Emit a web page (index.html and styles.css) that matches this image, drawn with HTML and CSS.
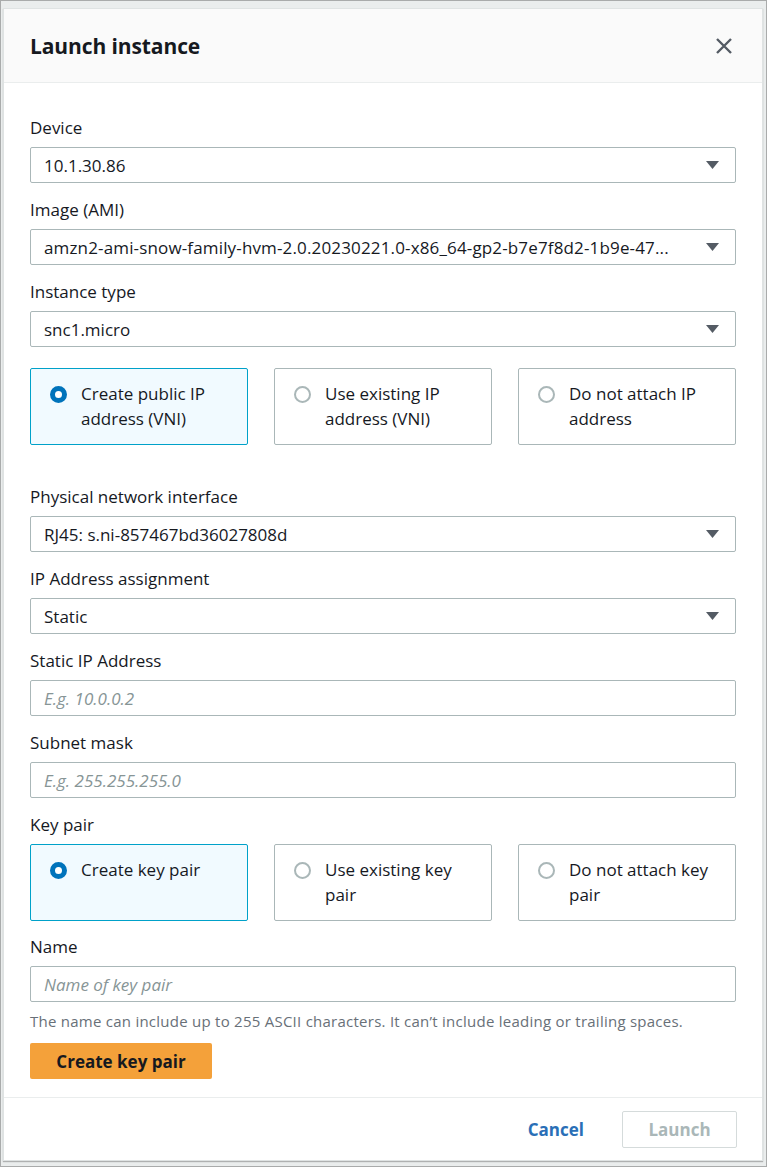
FILE: index.html
```html
<!DOCTYPE html>
<html lang="en">
<head>
<meta charset="utf-8">
<title>Launch instance</title>
<link rel="stylesheet" href="styles.css">
</head>
<body>
<div class="modal">
  <header class="modal-header">
    <h2 class="title">Launch instance</h2>
    <button class="close" aria-label="Close">
      <svg width="18" height="18" viewBox="0 0 18 18"><path d="M2 2 L16 16 M16 2 L2 16" stroke="#545b64" stroke-width="2.4" fill="none"/></svg>
    </button>
  </header>
  <div class="modal-body">
    <div class="field">
      <div class="label">Device</div>
      <div class="select"><span class="value">10.1.30.86</span><svg class="caret" width="13" height="8" viewBox="0 0 13 8"><path d="M0 0 H13 L6.5 8 Z" fill="#545b64"/></svg></div>
    </div>
    <div class="field">
      <div class="label">Image (AMI)</div>
      <div class="select"><span class="value value-ami">amzn2-ami-snow-family-hvm-2.0.20230221.0-x86_64-gp2-b7e7f8d2-1b9e-47...</span><svg class="caret" width="13" height="8" viewBox="0 0 13 8"><path d="M0 0 H13 L6.5 8 Z" fill="#545b64"/></svg></div>
    </div>
    <div class="field">
      <div class="label">Instance type</div>
      <div class="select"><span class="value">snc1.micro</span><svg class="caret" width="13" height="8" viewBox="0 0 13 8"><path d="M0 0 H13 L6.5 8 Z" fill="#545b64"/></svg></div>
    </div>
    <div class="tiles tiles-ip">
      <div class="tile selected"><span class="radio on"></span><span class="tile-text">Create public IP address (VNI)</span></div>
      <div class="tile"><span class="radio"></span><span class="tile-text">Use existing IP address (VNI)</span></div>
      <div class="tile"><span class="radio"></span><span class="tile-text">Do not attach IP address</span></div>
    </div>
    <div class="field">
      <div class="label">Physical network interface</div>
      <div class="select"><span class="value">RJ45: s.ni-857467bd36027808d</span><svg class="caret" width="13" height="8" viewBox="0 0 13 8"><path d="M0 0 H13 L6.5 8 Z" fill="#545b64"/></svg></div>
    </div>
    <div class="field">
      <div class="label">IP Address assignment</div>
      <div class="select"><span class="value">Static</span><svg class="caret" width="13" height="8" viewBox="0 0 13 8"><path d="M0 0 H13 L6.5 8 Z" fill="#545b64"/></svg></div>
    </div>
    <div class="field">
      <div class="label">Static IP Address</div>
      <input class="input" type="text" placeholder="E.g. 10.0.0.2">
    </div>
    <div class="field">
      <div class="label">Subnet mask</div>
      <input class="input" type="text" placeholder="E.g. 255.255.255.0">
    </div>
    <div class="field field-tiles">
      <div class="label">Key pair</div>
      <div class="tiles">
        <div class="tile selected"><span class="radio on"></span><span class="tile-text">Create key pair</span></div>
        <div class="tile"><span class="radio"></span><span class="tile-text">Use existing key pair</span></div>
        <div class="tile"><span class="radio"></span><span class="tile-text">Do not attach key pair</span></div>
      </div>
    </div>
    <div class="field field-last">
      <div class="label">Name</div>
      <input class="input" type="text" placeholder="Name of key pair">
      <div class="hint">The name can include up to 255 ASCII characters. It can’t include leading or trailing spaces.</div>
      <button class="btn-primary">Create key pair</button>
    </div>
  </div>
  <footer class="modal-footer">
    <button class="btn-link">Cancel</button>
    <button class="btn-disabled">Launch</button>
  </footer>
</div>
</body>
</html>
```
FILE: styles.css
```css
* { box-sizing: border-box; }
html, body { margin: 0; padding: 0; }
body {
  width: 767px;
  height: 1167px;
  background: #eaeded;
  border: 1px solid #a9abab;
  font-family: "Open Sans", "Noto Sans", sans-serif;
  color: #16191f;
  padding: 7px 3px 0 2px;
  overflow: hidden;
}
.modal {
  background: #fff;
  border: 1px solid #dfe3e3;
  box-shadow: 0 1px 1px rgba(0,0,0,0.25);
  height: 1153px;
  display: flex;
  flex-direction: column;
}
.modal-header {
  background: #fafafa;
  border-bottom: 1px solid #eaeded;
  height: 74px;
  display: flex;
  align-items: center;
  justify-content: space-between;
  padding: 0 26px 0 26px;
}
.title {
  margin: 0;
  font-size: 21px;
  font-weight: 700;
  letter-spacing: -0.1px;
  line-height: 24px;
}
.close {
  background: none;
  border: 0;
  padding: 0;
  width: 18px;
  height: 18px;
  display: flex;
  margin-right: 3px;
  cursor: pointer;
}
.modal-body {
  padding: 34px 26px 0 26px;
  flex: 1;
}
.field { margin-bottom: 16px; }
.label {
  font-size: 17px;
  line-height: 22px;
  margin-bottom: 8px;
}
.select {
  height: 36px;
  border: 1px solid #aab7b8;
  border-radius: 2px;
  display: flex;
  align-items: center;
  padding: 0 16px 0 13px;
  font-size: 17px;
}
.select .value {
  flex: 1;
  min-width: 0;
  white-space: nowrap;
  overflow: hidden;
  text-overflow: ellipsis;
  padding-right: 8px;
}
.select .value-ami { letter-spacing: 0.15px; }
.caret { flex: none; }
.input {
  display: block;
  width: 100%;
  height: 36px;
  border: 1px solid #aab7b8;
  border-radius: 2px;
  padding: 0 13px;
  font-family: inherit;
  font-size: 17px;
  color: #16191f;
  outline: none;
}
.input::placeholder {
  color: #879596;
  font-style: italic;
}
.tiles {
  display: grid;
  grid-template-columns: 1fr 1fr 1fr;
  gap: 26px;
}
.tiles-ip {
  margin-top: 21px;
  margin-bottom: 41px;
}
.tile {
  border: 1px solid #aab7b8;
  border-radius: 2px;
  height: 77px;
  padding: 12px 14px 13px 19px;
  display: flex;
  align-items: flex-start;
  font-size: 17px;
  line-height: 25px;
}
.tile.selected {
  background: #f1faff;
  border-color: #00a1c9;
}
.radio {
  flex: none;
  width: 17px;
  height: 17px;
  border-radius: 50%;
  border: 2px solid #aab7b8;
  background: #fff;
  margin-top: 5px;
  margin-right: 14px;
}
.radio.on {
  border: 5px solid #0073bb;
  background: #fff;
}
.field-tiles { margin-bottom: 15px; }
.field-last { margin-bottom: 0; }
.hint {
  font-size: 15px;
  line-height: 20px;
  color: #687078;
  margin-top: 9px;
  letter-spacing: 0.25px;
  white-space: nowrap;
}
.btn-primary {
  margin-top: 12px;
  background: #f4a13a;
  border: 0;
  border-radius: 2px;
  height: 36px;
  width: 182px;
  font-family: inherit;
  font-size: 17px;
  font-weight: 700;
  color: #16191f;
  padding: 0;
}
.modal-footer {
  border-top: 1px solid #eaeded;
  height: 63px;
  display: flex;
  align-items: center;
  justify-content: flex-end;
  padding: 0 25px 0 26px;
}
.btn-link {
  background: none;
  border: 0;
  font-family: inherit;
  font-size: 17px;
  font-weight: 700;
  color: #2a6fb7;
  padding: 0;
  margin-right: 38px;
}
.btn-disabled {
  background: #fff;
  border: 1px solid #d5dbdb;
  border-radius: 2px;
  height: 37px;
  width: 115px;
  font-family: inherit;
  font-size: 17px;
  font-weight: 700;
  color: #aab7b8;
  padding: 0;
}
```
